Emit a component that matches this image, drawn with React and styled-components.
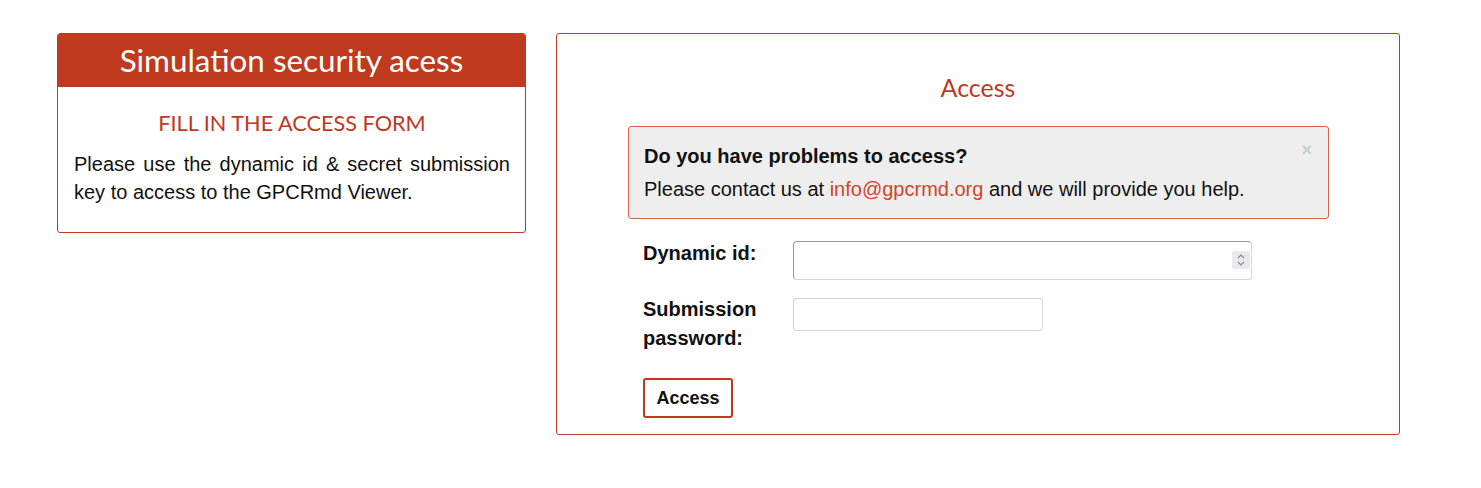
import React from "react";
import styled, { createGlobalStyle } from "styled-components";

const GlobalStyle = createGlobalStyle`
  * { box-sizing: border-box; }
  body {
    margin: 0;
    background: #fff;
    font-family: "Liberation Sans", Arial, sans-serif;
    color: #111;
  }
`;

const Page = styled.div`
  display: flex;
  align-items: flex-start;
  gap: 30px;
  padding: 33px 0 0 57px;
`;

const InfoPanel = styled.div`
  width: 469px;
  border: 1px solid #bf3a1e;
  border-radius: 3px;
  overflow: hidden;
`;

const InfoHeader = styled.div`
  background: #bf3a1e;
  color: #fff;
  font-family: Lato, "Open Sans", sans-serif;
  font-size: 31.4px;
  line-height: 53px;
  text-align: center;
`;

const InfoBody = styled.div`
  padding: 22px 15px 26px 16px;
`;

const SubTitle = styled.h3`
  margin: 0 0 13px;
  font-family: Lato, "Open Sans", sans-serif;
  font-weight: 400;
  font-size: 21.7px;
  line-height: 28px;
  color: #c0391f;
  text-align: center;
`;

const Paragraph = styled.p`
  margin: 0;
  font-size: 20px;
  line-height: 28px;
  text-align: justify;
`;

const FormPanel = styled.div`
  width: 844px;
  border: 1px solid #bf3a1e;
  border-radius: 3px;
  padding: 41px 70px 16px;
`;

const FormTitle = styled.h2`
  margin: 0 0 26px;
  font-family: Lato, "Open Sans", sans-serif;
  font-weight: 400;
  font-size: 25px;
  line-height: 25px;
  color: #c0391f;
  text-align: center;
`;

const Alert = styled.div`
  position: relative;
  margin-left: 1px;
  background: #eeeeee;
  border: 1px solid #dd6148;
  border-radius: 3px;
  padding: 15px 15px;
`;

const AlertTitle = styled.div`
  font-weight: 700;
  font-size: 20px;
  line-height: 28px;
  margin-bottom: 5px;
`;

const AlertText = styled.div`
  font-size: 20px;
  line-height: 28px;
`;

const Mail = styled.a`
  color: #d0452a;
  text-decoration: none;
`;

const Close = styled.button`
  position: absolute;
  top: 13px;
  right: 16px;
  border: 0;
  background: none;
  padding: 0;
  color: #c5ced4;
  font-family: "Liberation Sans", Arial, sans-serif;
  font-weight: 700;
  font-size: 18px;
  line-height: 20px;
  cursor: pointer;
`;

const Form = styled.form`
  padding: 19px 0 0 16px;
`;

const Row = styled.div`
  display: flex;
  align-items: flex-start;
  margin-bottom: ${(p) => p.$gap}px;
`;

const Label = styled.label`
  width: 150px;
  flex: none;
  padding-top: 1px;
  font-weight: 700;
  font-size: 20px;
  line-height: 29px;
`;

const Field = styled.div`
  position: relative;
  margin-top: ${(p) => p.$top}px;
`;

const Input = styled.input`
  display: block;
  width: ${(p) => p.$w}px;
  height: ${(p) => p.$h}px;
  border: 1px solid #d6d6d6;
  border-top-color: ${(p) => (p.$dark ? "#9a9a9a" : "#d0d0d0")};
  border-left-color: ${(p) => (p.$dark ? "#9a9a9a" : "#d0d0d0")};
  border-radius: 4px;
  padding: 0 28px 0 8px;
  font-size: 16px;
  font-family: "Liberation Sans", Arial, sans-serif;
  background: #fff;
  appearance: textfield;

  &::-webkit-inner-spin-button,
  &::-webkit-outer-spin-button {
    -webkit-appearance: none;
    margin: 0;
  }
`;

const Spinner = styled.span`
  position: absolute;
  top: 10px;
  right: 2px;
  width: 18px;
  height: 18px;
  background: #e9e9ed;
  border-radius: 2px;
  display: flex;
  align-items: center;
  justify-content: center;
  pointer-events: none;
`;

const Button = styled.button`
  width: 90px;
  height: 40px;
  background: #fff;
  border: 2px solid #c0391f;
  border-radius: 3px;
  font-family: "Liberation Sans", Arial, sans-serif;
  font-weight: 700;
  font-size: 18px;
  color: #111;
  cursor: pointer;
`;

export default function App() {
  return (
    <>
      <GlobalStyle />
      <Page>
        <InfoPanel>
          <InfoHeader>Simulation security acess</InfoHeader>
          <InfoBody>
            <SubTitle>FILL IN THE ACCESS FORM</SubTitle>
            <Paragraph>
              Please use the dynamic id &amp; secret submission key to access to
              the GPCRmd Viewer.
            </Paragraph>
          </InfoBody>
        </InfoPanel>

        <FormPanel>
          <FormTitle>Access</FormTitle>
          <Alert>
            <Close type="button">×</Close>
            <AlertTitle>Do you have problems to access?</AlertTitle>
            <AlertText>
              Please contact us at{" "}
              <Mail href="mailto:info@gpcrmd.org">info@gpcrmd.org</Mail> and we
              will provide you help.
            </AlertText>
          </Alert>
          <Form onSubmit={(e) => e.preventDefault()}>
            <Row $gap={14}>
              <Label>Dynamic id:</Label>
              <Field $top={3}>
                <Input type="number" $w={459} $h={39} $dark />
                <Spinner>
                  <svg width="10" height="14" viewBox="0 0 10 14" fill="none" stroke="#8a8a90" strokeWidth="1.2">
                    <path d="M2 5 L5 2 L8 5" />
                    <path d="M2 9 L5 12 L8 9" />
                  </svg>
                </Spinner>
              </Field>
            </Row>
            <Row $gap={25}>
              <Label>
                Submission
                <br />
                password:
              </Label>
              <Field $top={4}>
                <Input type="password" $w={250} $h={33} />
              </Field>
            </Row>
            <Button type="submit">Access</Button>
          </Form>
        </FormPanel>
      </Page>
    </>
  );
}
